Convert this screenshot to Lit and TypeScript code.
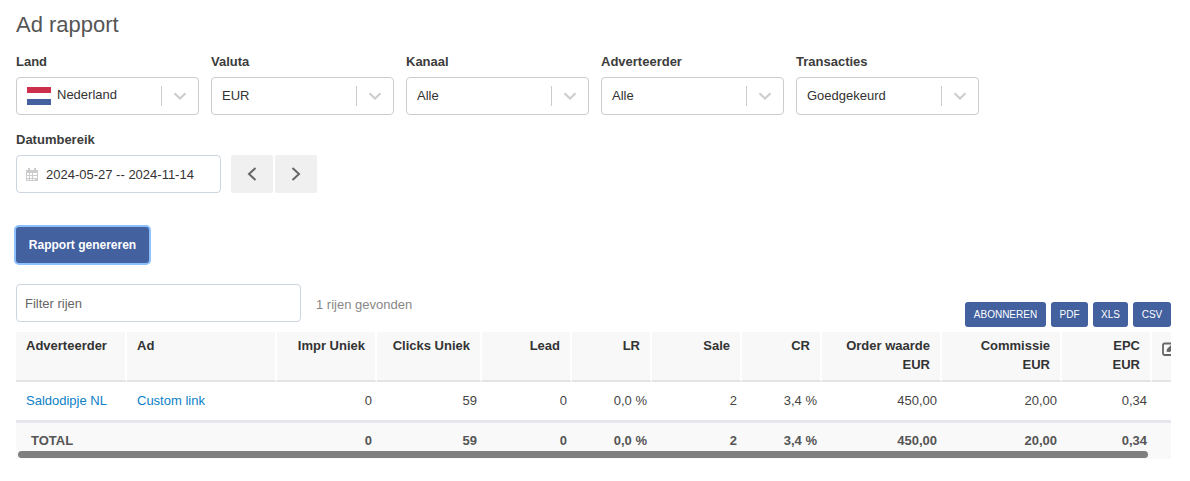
import { LitElement, html, css } from "lit";
import { customElement } from "lit/decorators.js";

const chevron = html`<svg class="chev" width="14" height="8" viewBox="0 0 14 8"><path d="M1.500 1.200 7 6.500l5.500-5.300" fill="none" stroke="#ccc" stroke-width="2"/></svg>`;
const cols = [111, 150, 100, 105, 90, 80, 90, 80, 120, 120, 90, 19];
const heads: [string, string?][] = [["Adverteerder"], ["Ad"], ["Impr Uniek"], ["Clicks Uniek"], ["Lead"], ["LR"], ["Sale"], ["CR"], ["Order waarde", "EUR"], ["Commissie", "EUR"], ["EPC", "EUR"]];
const row = ["0", "59", "0", "0,0 %", "2", "3,4 %", "450,00", "20,00", "0,34"];

@customElement("app-root")
export class AppRoot extends LitElement {
  static styles = css`
    :host { display: block; width: 1190px; height: 481px; overflow: hidden; background: #fff; font-family: "Liberation Sans", Arial, sans-serif; font-size: 13px; color: #333; box-sizing: border-box; padding: 0 19px 0 16px; position: relative; }
    h1 { margin: 0; padding-top: 13px; font-size: 22px; line-height: 24px; height: 24px; font-weight: 400; color: #555; }
    .filters { display: flex; gap: 12px; margin-top: 17px; }
    .field { display: flex; flex-direction: column; }
    label { font-size: 13px; font-weight: 700; line-height: 16px; color: #3c3c3c; height: 16px; margin-bottom: 7px; }
    .select { width: 183px; height: 38px; box-sizing: border-box; border: 1px solid #ccc; border-radius: 4px; display: flex; align-items: center; padding-left: 10px; background: #fff; color: #333; }
    .select .val { flex: 1; display: flex; align-items: center; gap: 6px; }
    .txt { position: relative; top: -1px; }
    .flag-text { position: relative; top: -2px; }
    .flag { width: 24px; height: 18px; display: block; }
    .sep { width: 1px; height: 20px; background: #ccc; }
    .chev { margin: 0 11px; display: block; }
    .date-row { display: flex; }
    .second { margin-top: 17px; }
    .date { width: 205px; height: 38px; box-sizing: border-box; border: 1px solid #ccd5e0; border-radius: 4px; display: flex; align-items: center; padding-left: 9px; gap: 8px; color: #333; }
    .arrows { display: flex; gap: 2px; margin-left: 10px; }
    .arrow { width: 42px; height: 38px; border: 0; padding: 0; background: #f0f0f0; border-radius: 2px; display: flex; align-items: center; justify-content: center; }
    .generate { display: block; margin-top: 34px; width: 133px; height: 36px; border: 0; border-radius: 3px; background: #43609f; color: #fff; font: 700 12px "Liberation Sans", Arial, sans-serif; box-shadow: 0 0 0 2px #8dc0ff; padding: 0; }
    .tools { display: flex; align-items: center; margin-top: 21px; height: 38px; position: relative; }
    .filter { width: 285px; height: 38px; box-sizing: border-box; border: 1px solid #ccd5e0; border-radius: 4px; padding: 0 8px; font-size: 13px; color: #666; display: flex; align-items: center; }
    .count { margin-left: 15px; color: #888; font-size: 13px; position: relative; top: 1px; }
    .export { position: absolute; right: 0; top: 18px; display: flex; gap: 5px; }
    .export button { height: 25px; border: 0; border-radius: 3px; background: #43609f; color: #fff; font: 10px "Liberation Sans", Arial, sans-serif; padding: 0; width: 37px; }
    .export button.wide { width: 81px; }
    .export button.xls { width: 35px; }
    .export button.csv { width: 38px; }
    .tw { margin-top: 10px; width: 1155px; height: 127px; overflow: hidden; position: relative; }
    table { border-collapse: separate; border-spacing: 0; table-layout: fixed; width: 1155px; }
    th { background: #f8f8f8; border-right: 2px solid #fff; border-bottom: 2px solid #e4e4e4; height: 50px; padding: 4px 10px 0 10px; box-sizing: border-box; vertical-align: top; font-size: 13px; font-weight: 700; line-height: 19px; color: #333; text-align: right; white-space: nowrap; }
    th.l, td.l { text-align: left; }
    th span { display: block; }
    td { height: 38px; box-sizing: border-box; padding: 0 5px 2px 10px; text-align: right; color: #444; font-size: 13px; white-space: nowrap; }
    td a { color: #0b7fc7; text-decoration: none; }
    .total td { background: #f9f9f9; border-top: 3px solid #e6e6ee; height: 39px; font-weight: 700; color: #555; padding-top: 0; padding-bottom: 1px; vertical-align: middle; }
    .total td.name { padding-left: 15px; }
    th.edit { padding: 10px 0 0 10px; border-right: 0; text-align: left; overflow: hidden; }
    th.edit svg { display: block; }
    .thumb { position: absolute; left: 2px; top: 119px; width: 1130px; height: 7px; background: #7f7f7f; border-radius: 4px; }
  `;

  select(v: string) {
    return html`<div class="select"><div class="val"><span class="txt">${v}</span></div><div class="sep"></div>${chevron}</div>`;
  }

  render() {
    return html`
      <h1>Ad rapport</h1>
      <div class="filters">
        <div class="field"><label>Land</label>
          <div class="select"><div class="val">
            <svg class="flag" viewBox="0 0 24 18"><rect width="24" height="6" fill="#cc2f4b"/><rect y="6" width="24" height="6" fill="#fff"/><rect y="12" width="24" height="6" fill="#43609f"/></svg>
            <span class="flag-text">Nederland</span></div><div class="sep"></div>${chevron}</div>
        </div>
        <div class="field"><label>Valuta</label>${this.select("EUR")}</div>
        <div class="field"><label>Kanaal</label>${this.select("Alle")}</div>
        <div class="field"><label>Adverteerder</label>${this.select("Alle")}</div>
        <div class="field"><label>Transacties</label>${this.select("Goedgekeurd")}</div>
      </div>
      <div class="field second"><label>Datumbereik</label>
        <div class="date-row">
          <div class="date">
            <svg width="12" height="13" viewBox="0 0 12 13"><path fill="#ccc" d="M0 2h2V0h2v2h4V0h2v2h2v11H0zM1 5v2h2V5zm3 0v2h2V5zm3 0v2h2V5zm2 0v2h2V5zM1 8v2h2V8zm3 0v2h2V8zm3 0v2h2V8zm2 0v2h2V8zM1 11v1h2v-1zm3 0v1h2v-1zm3 0v1h2v-1z"/></svg>
            <span>2024-05-27 -- 2024-11-14</span>
          </div>
          <div class="arrows">
            <button class="arrow" aria-label="Vorige"><svg width="12" height="16" viewBox="0 0 12 16"><path d="M9.500 2 3 8l6.500 6" fill="none" stroke="#666" stroke-width="2"/></svg></button>
            <button class="arrow" aria-label="Volgende"><svg width="12" height="16" viewBox="0 0 12 16"><path d="M2.500 2 9 8l-6.500 6" fill="none" stroke="#666" stroke-width="2"/></svg></button>
          </div>
        </div>
      </div>
      <button class="generate">Rapport genereren</button>
      <div class="tools">
        <div class="filter">Filter rijen</div>
        <span class="count">1 rijen gevonden</span>
        <div class="export"><button class="wide">ABONNEREN</button><button>PDF</button><button class="xls">XLS</button><button class="csv">CSV</button></div>
      </div>
      <div class="tw">
        <table>
          <colgroup>${cols.map((w) => html`<col style="width:${w}px" />`)}</colgroup>
          <thead><tr>
            ${heads.map((h, i) => html`<th class=${i < 2 ? "l" : ""}><span>${h[0]}</span>${h[1] ? html`<span>${h[1]}</span>` : ""}</th>`)}
            <th class="edit"><svg width="14" height="14" viewBox="0 0 14 14"><path d="M10 1.500H2.500A1.500 1.500 0 0 0 1 3v8.500A1.500 1.500 0 0 0 2.500 13h8a1.500 1.500 0 0 0 1.500-1.500V7" fill="none" stroke="#666" stroke-width="1.800"/><path d="M4.500 9.800 5 7l6-6 3 3-6 6z" fill="#666"/></svg></th>
          </tr></thead>
          <tbody>
            <tr><td class="l"><a href="#">Saldodipje NL</a></td><td class="l"><a href="#">Custom link</a></td>${row.map((c) => html`<td>${c}</td>`)}<td></td></tr>
            <tr class="total"><td class="l name">TOTAL</td><td></td>${row.map((c) => html`<td>${c}</td>`)}<td></td></tr>
          </tbody>
        </table>
        <div class="thumb"></div>
      </div>
    `;
  }
}
